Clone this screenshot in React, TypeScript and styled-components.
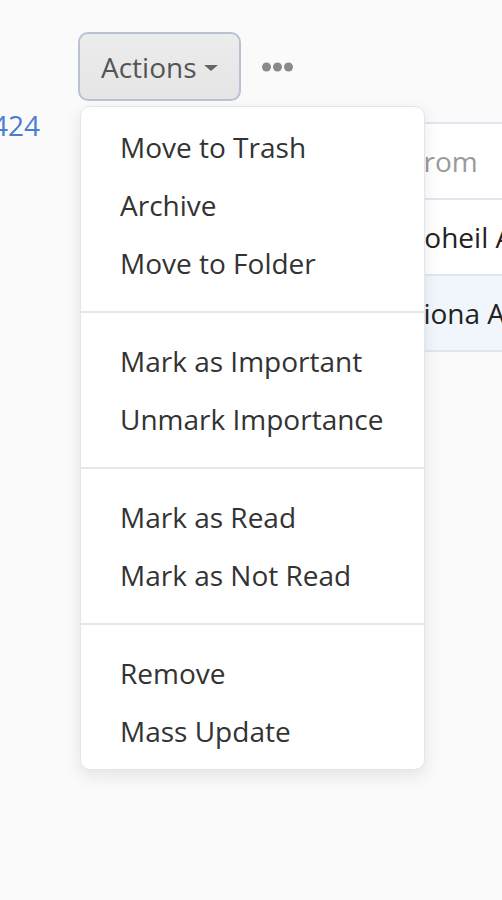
import styled, { createGlobalStyle } from "styled-components";

const GlobalStyle = createGlobalStyle`
  html, body {
    margin: 0;
    padding: 0;
    background: #fafafa;
    font-family: "Open Sans", "Noto Sans", sans-serif;
    overflow: hidden;
  }
`;

type MenuGroup = string[];

const menuGroups: MenuGroup[] = [
  ["Move to Trash", "Archive", "Move to Folder"],
  ["Mark as Important", "Unmark Importance"],
  ["Mark as Read", "Mark as Not Read"],
  ["Remove", "Mass Update"],
];

const rows = [
  { from: "From", header: true, selected: false },
  { from: "Soheil Ahmadi", header: false, selected: false },
  { from: "Fiona Adams", header: false, selected: true },
];

const App = () => {
  return (
    <Page>
      <GlobalStyle />
      <Toolbar>
        <ActionsWrap>
          <ActionsButton type="button">
            Actions
            <Caret />
          </ActionsButton>
          <Menu>
            {menuGroups.map((group, i) => (
              <div key={i}>
                {i > 0 && <Divider />}
                {group.map((label) => (
                  <MenuItem key={label}>{label}</MenuItem>
                ))}
              </div>
            ))}
          </Menu>
        </ActionsWrap>
        <MoreButton type="button" aria-label="More">
          <svg width="31" height="10" viewBox="0 0 31 10">
            <circle cx="4.5" cy="5" r="4.5" fill="#8a8a8a" />
            <circle cx="15.5" cy="5" r="4.5" fill="#8a8a8a" />
            <circle cx="26.5" cy="5" r="4.5" fill="#8a8a8a" />
          </svg>
        </MoreButton>
      </Toolbar>
      <Content>
        <Count>424</Count>
        <Table>
          {rows.map((row) => (
            <Row key={row.from} $selected={row.selected}>
              <Spacer />
              <Cell $header={row.header}>{row.from}</Cell>
            </Row>
          ))}
        </Table>
      </Content>
    </Page>
  );
};

export default App;

const Page = styled.div`
  min-height: 100vh;
  background: #fafafa;
`;

const Toolbar = styled.div`
  display: flex;
  align-items: center;
  gap: 21px;
  padding: 32px 0 0 78px;
`;

const ActionsWrap = styled.div`
  position: relative;
`;

const ActionsButton = styled.button`
  display: flex;
  align-items: center;
  gap: 7px;
  box-sizing: border-box;
  width: 163px;
  height: 69px;
  padding: 0 0 0 21px;
  border: 2px solid #b9c1d5;
  border-radius: 10px;
  background: linear-gradient(#ececec, #e5e5e5);
  color: #555;
  font-family: "Open Sans", "Noto Sans", sans-serif;
  font-size: 28px;
  cursor: pointer;
`;

const Caret = styled.span`
  width: 0;
  height: 0;
  margin-top: 2px;
  border-left: 7px solid transparent;
  border-right: 7px solid transparent;
  border-top: 6px solid #666;
`;

const MoreButton = styled.button`
  display: flex;
  align-items: center;
  padding: 0;
  border: none;
  background: none;
  cursor: pointer;
`;

const Menu = styled.div`
  position: absolute;
  top: calc(100% + 5px);
  left: 2px;
  z-index: 10;
  box-sizing: border-box;
  width: 345px;
  padding: 11px 0 9px;
  border: 1px solid #e2e5ef;
  border-radius: 10px;
  background: #fff;
  box-shadow: 0 6px 16px rgba(40, 40, 60, 0.1);
`;

const MenuItem = styled.div`
  padding-left: 39px;
  line-height: 58px;
  font-size: 28px;
  color: #333;
  white-space: nowrap;
  cursor: pointer;
`;

const Divider = styled.div`
  height: 2px;
  margin: 19px 0;
  background: #e5e6ea;
`;

const Content = styled.div`
  display: flex;
  align-items: flex-start;
`;

const Count = styled.div`
  flex: 0 0 auto;
  width: 90px;
  margin: 4px 0 0 -8px;
  line-height: 40px;
  font-size: 28px;
  color: #4a7dcf;
`;

const Table = styled.div`
  flex: 1 0 auto;
  margin-top: 21px;
  border-top: 2px solid #e3e6f0;
  background: #fff;
`;

const Row = styled.div<{ $selected: boolean }>`
  display: flex;
  height: 74px;
  border-bottom: 2px solid #e3e6f0;
  background: ${(p) => (p.$selected ? "#f1f6fc" : "#fff")};
`;

const Spacer = styled.div`
  flex: 0 0 327px;
`;

const Cell = styled.div<{ $header: boolean }>`
  line-height: 74px;
  font-size: 28px;
  white-space: nowrap;
  color: ${(p) => (p.$header ? "#9a9a9a" : "#222")};
`;
